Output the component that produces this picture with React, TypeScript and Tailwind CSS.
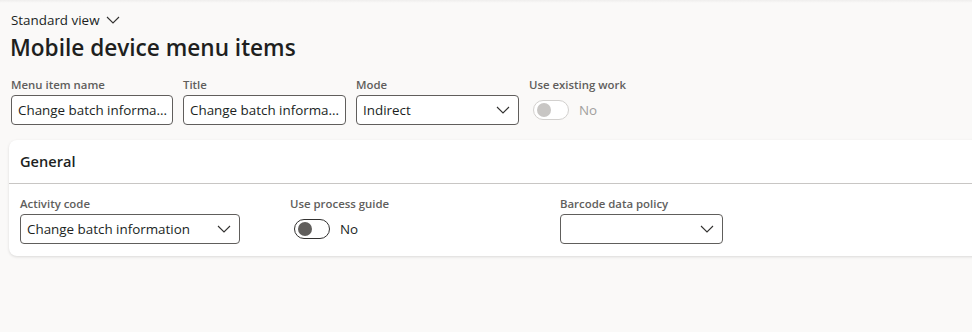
import React from "react";

const font = { fontFamily: '"Open Sans", "Noto Sans", Arial, sans-serif' };

function Chevron({ className = "" }: { className?: string }) {
  return (
    <svg width="14" height="8" viewBox="0 0 14 8" className={className} fill="none">
      <path d="M1 1l6 6 6-6" stroke="#323130" strokeWidth="1.1" />
    </svg>
  );
}

function TextBox({ value, w }: { value: string; w: string }) {
  return (
    <div className={`${w} h-[30px] rounded-[4px] border border-[#605e5c] bg-white px-[6px] flex items-center text-[13.4px] text-[#201f1e] overflow-hidden whitespace-nowrap`}>
      {value}
    </div>
  );
}

function Select({ value, w }: { value: string; w: string }) {
  return (
    <div className={`${w} h-[30px] rounded-[4px] border border-[#605e5c] bg-white pl-[6px] pr-[8px] flex items-center justify-between text-[13.4px] text-[#201f1e] whitespace-nowrap`}>
      <span>{value}</span>
      <Chevron />
    </div>
  );
}

function Label({ children }: { children: React.ReactNode }) {
  return <div className="text-[11.4px] font-semibold text-[#605e5c] leading-[16px] h-[16px] mb-[2px] whitespace-nowrap">{children}</div>;
}

function Toggle({ disabled }: { disabled?: boolean }) {
  return (
    <div className="flex items-center gap-[10px] h-[30px] pl-[4px]">
      <div className={`w-[36px] h-[20px] rounded-full border ${disabled ? "border-[#d2d0ce]" : "border-[#323130]"} bg-white flex items-center pl-[3px]`}>
        <div className={`w-[14px] h-[14px] rounded-full ${disabled ? "bg-[#c8c6c4]" : "bg-[#605e5c]"}`} />
      </div>
      <span className={`text-[13.4px] ${disabled ? "text-[#a19f9d]" : "text-[#201f1e]"}`}>No</span>
    </div>
  );
}

export default function App() {
  return (
    <div style={font} className="w-[972px] h-[332px] bg-[#faf9f8] overflow-hidden relative">
      <div className="h-[3px] bg-gradient-to-b from-[#efeeed] to-[#faf9f8]" />
      <div className="pl-[11px] pt-[7px] flex items-center gap-[6px] text-[13.4px] text-[#201f1e] leading-[20px]">
        <span>Standard view</span>
        <Chevron />
      </div>
      <h1 className="pl-[10px] mt-[3px] text-[22.6px] font-semibold text-[#201f1e] leading-[30px]">Mobile device menu items</h1>
      <div className="flex gap-[10px] pl-[11px] mt-[14px]">
        <div>
          <Label>Menu item name</Label>
          <TextBox value="Change batch informa..." w="w-[162px]" />
        </div>
        <div>
          <Label>Title</Label>
          <TextBox value="Change batch informa..." w="w-[163px]" />
        </div>
        <div>
          <Label>Mode</Label>
          <Select value="Indirect" w="w-[163px]" />
        </div>
        <div>
          <Label>Use existing work</Label>
          <Toggle disabled />
        </div>
      </div>
      <div className="ml-[9px] mt-[15px] w-[980px] bg-white rounded-[8px] shadow-[0_1px_3px_rgba(0,0,0,0.13)]">
        <div className="h-[44px] pl-[11px] flex items-center text-[14.6px] font-semibold text-[#201f1e] border-b border-[#c8c6c4]">General</div>
        <div className="flex pl-[11px] pt-[12px] pb-[12px]">
          <div className="w-[270px]">
            <Label>Activity code</Label>
            <Select value="Change batch information" w="w-[220px]" />
          </div>
          <div className="w-[270px]">
            <Label>Use process guide</Label>
            <Toggle />
          </div>
          <div>
            <Label>Barcode data policy</Label>
            <Select value="" w="w-[163px]" />
          </div>
        </div>
      </div>
    </div>
  );
}
